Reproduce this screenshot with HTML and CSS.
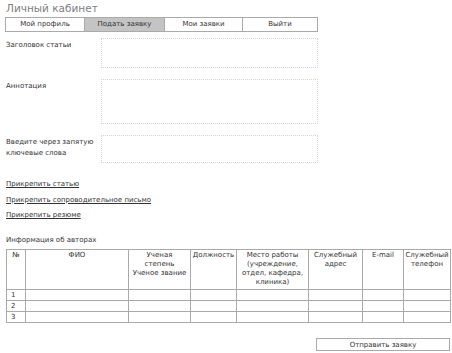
FILE: index.html
```html
<!DOCTYPE html>
<html lang="ru">
<head>
    <meta charset="UTF-8">
    <title>Личный кабинет</title>
    <link rel="stylesheet" href="styles.css">
</head>
<body>
    <div id="cabinet">
        <h1 class="page-title">Личный кабинет</h1>

        <div class="tabs">
            <a class="tab" href="#">Мой профиль</a>
            <a class="tab active" href="#">Подать заявку</a>
            <a class="tab" href="#">Мои заявки</a>
            <a class="tab" href="#">Выйти</a>
        </div>

        <form class="request-form">
            <div class="form-row">
                <label class="form-label">Заголовок статьи</label>
                <textarea class="field field-title"></textarea>
            </div>
            <div class="form-row">
                <label class="form-label">Аннотация</label>
                <textarea class="field field-annotation"></textarea>
            </div>
            <div class="form-row">
                <label class="form-label">Введите через запятую ключевые слова</label>
                <textarea class="field field-keywords"></textarea>
            </div>

            <div class="attachments">
                <a href="#">Прикрепить статью</a>
                <a href="#">Прикрепить сопроводительное письмо</a>
                <a href="#">Прикрепить резюме</a>
            </div>

            <p class="section-title">Информация об авторах</p>

            <table class="authors">
                <colgroup>
                    <col style="width:19px">
                    <col style="width:103px">
                    <col style="width:62px">
                    <col style="width:46px">
                    <col style="width:72px">
                    <col style="width:54px">
                    <col style="width:41px">
                    <col style="width:47px">
                </colgroup>
                <tr class="head">
                    <th>№</th>
                    <th>ФИО</th>
                    <th>Ученая<br>степень<br>Ученое звание</th>
                    <th>Должность</th>
                    <th>Место работы (учреждение, отдел, кафедра, клиника)</th>
                    <th>Служебный адрес</th>
                    <th>E-mail</th>
                    <th>Служебный телефон</th>
                </tr>
                <tr><td>1</td><td></td><td></td><td></td><td></td><td></td><td></td><td></td></tr>
                <tr><td>2</td><td></td><td></td><td></td><td></td><td></td><td></td><td></td></tr>
                <tr><td>3</td><td></td><td></td><td></td><td></td><td></td><td></td><td></td></tr>
            </table>

            <div class="actions">
                <button type="button" class="submit-btn">Отправить заявку</button>
            </div>
        </form>
    </div>
</body>
</html>
```

FILE: styles.css
```css
* {
    margin: 0;
    padding: 0;
    box-sizing: border-box;
}

body {
    font-family: "DejaVu Sans", Verdana, sans-serif;
    font-size: 7px;
    color: #333;
    background: #fff;
    padding: 2px 2px 0 6px;
}

.page-title {
    font-size: 10.5px;
    font-weight: normal;
    color: #808080;
    line-height: 12px;
}

.tabs {
    display: flex;
    width: 313px;
    margin: 3px 0 0 -1px;
    border: 1px solid #aaa;
}

.tab {
    flex: 1;
    height: 13px;
    line-height: 13px;
    text-align: center;
    color: #333;
    text-decoration: none;
    border-left: 1px solid #aaa;
    background: #fff;
}

.tab:first-child {
    border-left: none;
    flex: 0 0 78px;
}

.tab:nth-child(2) { flex: 0 0 80px; }
.tab:nth-child(3) { flex: 0 0 78px; }

.tab.active {
    background: #c4c4c4;
}

.form-row {
    display: flex;
    align-items: flex-start;
}

.form-row:first-child { margin-top: 6px; }

.form-label {
    width: 95px;
    line-height: 11px;
    padding-top: 2px;
}

.field {
    display: block;
    width: 217px;
    border: 1px dotted #d4d0e4;
    resize: none;
    font-family: inherit;
    font-size: 7px;
    margin-bottom: 11px;
}

.field-title { height: 30px; }
.field-annotation { height: 45px; }
.field-keywords { height: 28px; margin-bottom: 0; }

.attachments {
    display: flex;
    flex-direction: column;
    gap: 4.5px;
    margin-top: 16px;
}

.attachments a {
    color: #333;
    line-height: 11px;
}

.section-title {
    margin-top: 14px;
    line-height: 11px;
}

.authors {
    margin-top: 3px;
    width: 444px;
    table-layout: fixed;
    border-collapse: collapse;
    border: 1px solid #999;
}

.authors th,
.authors td {
    border: 1px solid #aaa;
    font-weight: normal;
    vertical-align: top;
    text-align: center;
    line-height: 9px;
    padding: 1px 1px 0;
}

.authors .head th { height: 40px; }

.authors td {
    height: 10px;
    text-align: left;
    padding-left: 4px;
}

.actions {
    display: flex;
    justify-content: flex-end;
    margin-top: 15px;
}

.submit-btn {
    width: 134px;
    height: 13px;
    border: 1px solid #aaa;
    background: #fff;
    font-family: inherit;
    font-size: 7px;
    color: #333;
}
```
